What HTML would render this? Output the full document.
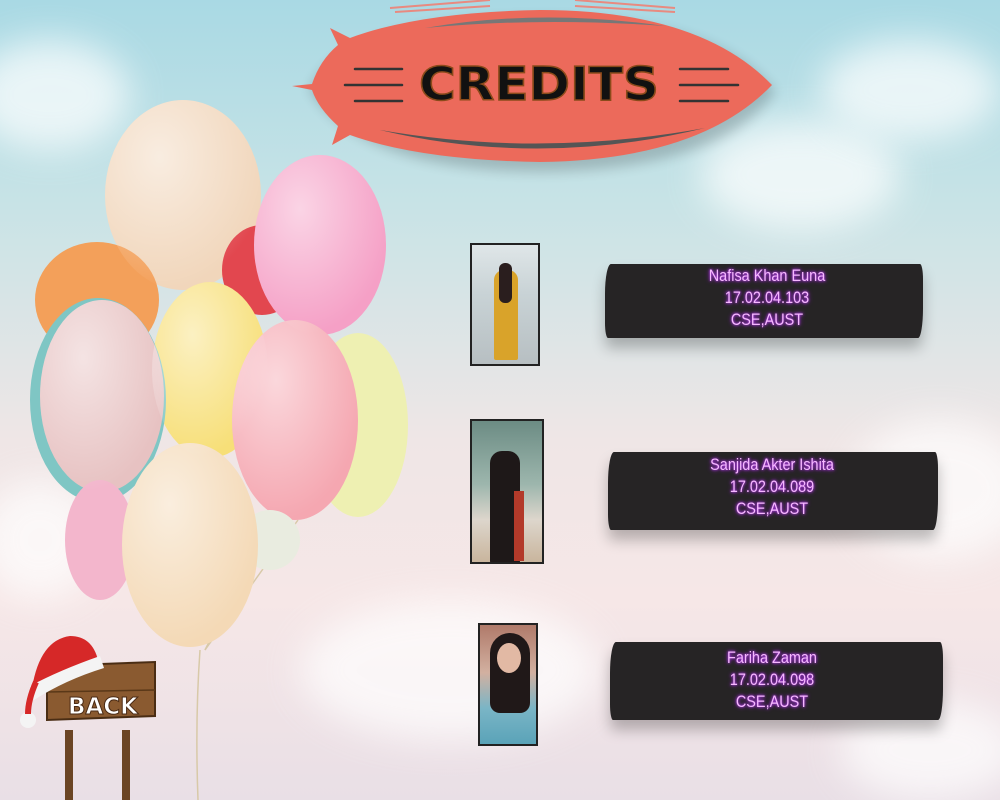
<!DOCTYPE html>
<html><head><meta charset="utf-8"><style>
*{margin:0;padding:0;box-sizing:border-box}
html,body{width:1000px;height:800px;overflow:hidden}
body{position:relative;font-family:"Liberation Sans",sans-serif;
background:linear-gradient(180deg,#a9d9e4 0%,#c7e3e6 25%,#efe6e6 55%,#f6e7e7 75%,#e9dfe6 100%)}
.cl{position:absolute;border-radius:50%;background:#fff;filter:blur(18px);opacity:.7}
.ph{position:absolute;border:2px solid #222;overflow:hidden}
.card{position:absolute;color:#f6b8ff;text-align:center;font-size:17px;line-height:22px;
text-shadow:0 0 3px #c040ff,0 0 5px #a020e0;font-family:"Liberation Sans Narrow","Liberation Sans",sans-serif;transform:scaleX(.85)}
.brush{position:absolute;background:#262425;border-radius:6px 3px 5px 3px/40% 20% 40% 20%;box-shadow:0 10px 14px rgba(0,0,0,.25)}
</style></head><body>
<div class="cl" style="left:-30px;top:40px;width:160px;height:110px"></div>
<div class="cl" style="left:700px;top:120px;width:200px;height:110px"></div>
<div class="cl" style="left:820px;top:40px;width:180px;height:100px"></div>
<div class="cl" style="left:850px;top:420px;width:180px;height:140px"></div>
<div class="cl" style="left:300px;top:600px;width:300px;height:140px"></div>
<div class="cl" style="left:840px;top:700px;width:180px;height:100px"></div>
<div class="cl" style="left:-20px;top:480px;width:120px;height:120px"></div>

<svg width="1000" height="800" style="position:absolute;left:0;top:0">
<defs>
<radialGradient id="g" cx="35%" cy="30%" r="70%"><stop offset="0" stop-color="#fff" stop-opacity=".55"/><stop offset="1" stop-color="#fff" stop-opacity="0"/></radialGradient>
<filter id="bl"><feGaussianBlur stdDeviation="6"/></filter>
</defs>
<g stroke="#d8c9a8" stroke-width="1.5" fill="none">
<path d="M200 650 Q195 720 198 800"/><path d="M265 530 L205 650"/><path d="M298 520 L205 650"/>
</g>
<g>
<ellipse cx="183" cy="195" rx="78" ry="95" fill="#f1d6bb"/>
<ellipse cx="97" cy="300" rx="62" ry="58" fill="#f3a05a"/>
<ellipse cx="262" cy="270" rx="40" ry="45" fill="#e2474f"/>
<ellipse cx="320" cy="245" rx="66" ry="90" fill="#f5a0c6"/>
<ellipse cx="210" cy="370" rx="58" ry="88" fill="#f7df78"/>
<ellipse cx="358" cy="425" rx="50" ry="92" fill="#eef0b2"/>
<ellipse cx="98" cy="400" rx="68" ry="102" fill="#7fc6c4"/>
<ellipse cx="102" cy="396" rx="62" ry="96" fill="#e7c2c2"/>
<ellipse cx="100" cy="540" rx="35" ry="60" fill="#f3b6cc"/>
<ellipse cx="295" cy="420" rx="63" ry="100" fill="#f5a7b1"/>
<ellipse cx="270" cy="540" rx="30" ry="30" fill="#e9ece0"/>
<ellipse cx="190" cy="545" rx="68" ry="102" fill="#f4d9b6"/>
</g>
<g fill="url(#g)">
<ellipse cx="183" cy="195" rx="78" ry="95"/><ellipse cx="320" cy="245" rx="66" ry="90"/><ellipse cx="210" cy="370" rx="58" ry="88"/>
<ellipse cx="102" cy="396" rx="62" ry="96"/><ellipse cx="295" cy="420" rx="63" ry="100"/><ellipse cx="190" cy="545" rx="68" ry="102"/>
</g>
<!-- title blimp -->
<g stroke="#e88a80" stroke-width="2"><line x1="390" y1="8" x2="490" y2="0"/><line x1="395" y1="12" x2="490" y2="6"/><line x1="575" y1="0" x2="675" y2="8"/><line x1="575" y1="6" x2="675" y2="12"/></g>
<path d="M310 90 Q340 20 540 18 Q720 18 775 92 Q720 170 540 172 Q360 170 310 90Z" fill="#000" opacity=".18" filter="url(#bl)"/>
<path d="M292 86 L312 84 Q320 60 338 45 L330 28 L350 38 Q420 12 540 10 Q700 10 772 85 Q700 160 540 162 Q420 160 350 135 L332 145 L338 126 Q318 108 312 90 Z" fill="#ec6a5b"/>
<path d="M425 28 Q540 8 665 26 Q540 17 425 28Z" fill="#777"/>
<path d="M380 130 Q540 168 705 128 Q540 158 380 130Z" fill="#555"/>
<g stroke="#333" stroke-width="2.5" stroke-linecap="round">
<line x1="355" y1="69" x2="402" y2="69"/><line x1="345" y1="85" x2="402" y2="85"/><line x1="355" y1="101" x2="402" y2="101"/>
<line x1="680" y1="69" x2="728" y2="69"/><line x1="680" y1="85" x2="738" y2="85"/><line x1="680" y1="101" x2="728" y2="101"/>
</g>
<text x="539" y="100" text-anchor="middle" font-family="DejaVu Sans,sans-serif" font-weight="bold" font-size="46" fill="#111" stroke="#8a4a1a" stroke-width="1.5" textLength="240" lengthAdjust="spacingAndGlyphs">CREDITS</text>
</svg>

<div class="ph" style="left:470px;top:243px;width:70px;height:123px;background:linear-gradient(180deg,#dfe6e8 0%,#c9d3d6 40%,#b7bfc2 100%)">
<div style="position:absolute;left:22px;top:25px;width:24px;height:90px;background:#d9a32a;border-radius:10px 10px 2px 2px"></div>
<div style="position:absolute;left:27px;top:18px;width:13px;height:40px;background:#2a1e1e;border-radius:6px"></div></div>
<div class="ph" style="left:470px;top:419px;width:74px;height:145px;background:linear-gradient(180deg,#6c8c84,#9db6ad 45%,#ddd6cc 70%,#c9b59d)">
<div style="position:absolute;left:18px;top:30px;width:30px;height:112px;background:#1e1818;border-radius:12px 12px 2px 2px"></div>
<div style="position:absolute;left:42px;top:70px;width:10px;height:70px;background:#b33a2a"></div></div>
<div class="ph" style="left:478px;top:623px;width:60px;height:123px;background:linear-gradient(180deg,#b07a6a,#d2b0a0 40%,#7ab5c6 70%,#5aa3b8)">
<div style="position:absolute;left:10px;top:8px;width:40px;height:80px;background:#201818;border-radius:20px 20px 10px 10px"></div>
<div style="position:absolute;left:17px;top:18px;width:24px;height:30px;background:#e2b9a4;border-radius:50%"></div></div>

<div class="brush" style="left:605px;top:264px;width:318px;height:74px"></div>
<div class="card" style="left:617px;top:265px;width:300px">Nafisa Khan Euna<br>17.02.04.103<br>CSE,AUST</div>
<div class="brush" style="left:608px;top:452px;width:330px;height:78px"></div>
<div class="card" style="left:622px;top:454px;width:300px">Sanjida Akter Ishita<br>17.02.04.089<br>CSE,AUST</div>
<div class="brush" style="left:610px;top:642px;width:333px;height:78px"></div>
<div class="card" style="left:622px;top:647px;width:300px">Fariha Zaman<br>17.02.04.098<br>CSE,AUST</div>

<svg width="170" height="170" style="position:absolute;left:10px;top:630px">
<rect x="55" y="100" width="8" height="70" fill="#6b4524"/><rect x="112" y="100" width="8" height="70" fill="#6b4524"/>
<path d="M37 36 L145 32 L145 86 L37 90Z" fill="#8a5a30" stroke="#4a2d14" stroke-width="2"/>
<path d="M37 62 L145 60" stroke="#5a3818" stroke-width="1.5"/>
<text x="93" y="84" text-anchor="middle" font-family="DejaVu Sans,sans-serif" font-weight="bold" font-size="23" fill="#fff" stroke="#4a2a14" stroke-width="1">BACK</text>
<path d="M22 58 Q30 10 60 6 Q82 6 88 30 L30 58Z" fill="#d62828"/>
<path d="M20 56 Q50 40 90 26 L94 38 Q55 50 24 70Z" fill="#f4f4f4"/>
<circle cx="18" cy="90" r="8" fill="#f4f4f4"/><path d="M26 52 Q18 70 18 84" stroke="#d62828" stroke-width="6" fill="none"/>
</svg>
</body></html>
